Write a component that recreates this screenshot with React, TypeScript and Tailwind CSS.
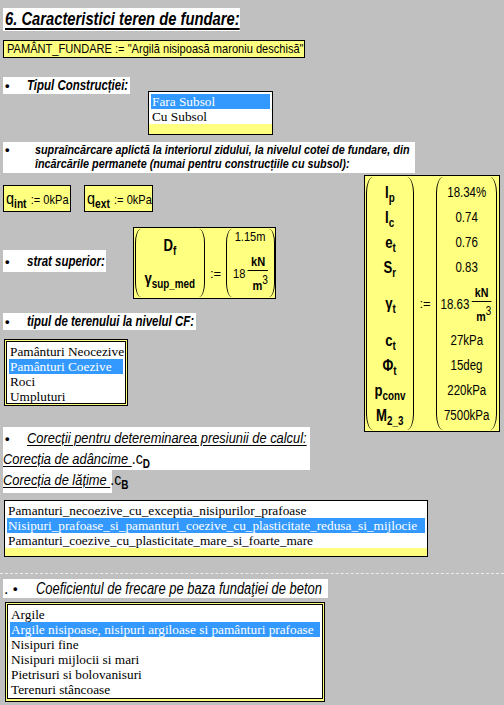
import React from 'react';

const SANS = "font-['Liberation_Sans','Arial',sans-serif]";
const SERIF = "font-['Liberation_Serif','Times_New_Roman',serif]";

type ListBoxProps = {
  items: string[];
  selected: number;
  className: string;
  innerClassName?: string;
};

// mathcad style list box: black frame, yellow region, white list
const ListBox = ({ items, selected, className, innerClassName = '' }: ListBoxProps) => (
  <div className={`border border-black bg-[#ffff80] ${className}`}>
    <div className={`bg-white ${SERIF} text-[13.3px] leading-[15px] whitespace-nowrap text-black ${innerClassName}`}>
      {items.map((item, i) => (
        <div key={item} className={i === selected ? 'bg-[#3399ff] text-white pl-[1px]' : 'pl-[1px]'}>
          {item}
        </div>
      ))}
    </div>
  </div>
);

const Sub = ({ children }: { children: React.ReactNode }) => (
  <span className="align-[-4px] text-[12px] font-bold not-italic leading-none">{children}</span>
);

const Sym = ({ children }: { children: React.ReactNode }) => (
  <span className="text-[16px] font-bold leading-none">{children}</span>
);

// the sheet uses a narrow arial, squeeze the regular one
const Cell = ({ h, children }: { h: string; children: React.ReactNode }) => (
  <div className={`${h} flex items-center justify-center whitespace-nowrap`}>
    <span className="inline-block scale-x-[0.82]">{children}</span>
  </div>
);

const Frac = () => (
  <span className="inline-flex flex-col items-center leading-none">
    <span className="text-[13px] font-bold pb-[2px]">kN</span>
    <span className="w-[24px] border-t border-black" />
    <span className="text-[13px] font-bold pt-[3px] pl-[5px]">
      m<span className="align-[6px] text-[12px] font-normal">3</span>
    </span>
  </span>
);

const Bullet = () => (
  <span className="inline-block w-[24px] pl-[2px] not-italic font-bold text-[13px]">•</span>
);

export default function App() {
  return (
    <div className={`w-[504px] h-[705px] bg-[#c0c0c0] overflow-hidden text-black ${SANS}`}>
      {/* title */}
      <div className="pt-[8px] pl-[3px]">
        <div className="w-[237px] h-[23px] bg-white pl-[2px] text-[18px] leading-[23px] font-bold italic whitespace-nowrap">
          <span className="inline-block origin-left scale-x-[0.82] underline decoration-[1.5px] underline-offset-[3px]">
            6. Caracteristici teren de fundare:
          </span>
        </div>
      </div>

      <div className="mt-[9px] ml-[3px] w-[302px] h-[18px] border border-black bg-[#ffff80] pl-[3px] text-[13.5px] leading-[16px] whitespace-nowrap">
        <span className="inline-block origin-left scale-x-[0.82]">
          PAMÂNT_FUNDARE := "Argilă nisipoasă maroniu deschisă"
        </span>
      </div>

      {/* tipul constructiei */}
      <div className="flex items-start pl-[3px]">
        <div className="mt-[19px] w-[127px] h-[17px] bg-white text-[14px] leading-[17px] font-bold italic whitespace-nowrap">
          <Bullet />
          <span className="inline-block origin-left scale-x-[0.82]">Tipul Construcției:</span>
        </div>
        <ListBox
          items={['Fara Subsol', 'Cu Subsol']}
          selected={0}
          className="mt-[33px] ml-[18px] w-[125px] h-[44px] pb-[7px]"
          innerClassName="pt-[2px] px-[2px]"
        />
      </div>

      {/* supraincarcare */}
      <div className="mt-[7px] ml-[3px] w-[412px] h-[31px] bg-white flex text-[13.5px] leading-[14px] font-bold italic pt-[1px] whitespace-nowrap">
        <span className="w-[32px] shrink-0 pl-[2px] not-italic text-[13px]">•</span>
        <span className="inline-block origin-left scale-x-[0.8]">
          supraîncărcare aplictă la interiorul zidului, la nivelul cotei de fundare, din
          <br />
          încărcările permanete (numai pentru construcțiile cu subsol):
        </span>
      </div>

      <div className="flex items-start">
        {/* left column */}
        <div className="w-[364px] shrink-0 pl-[3px]">
          <div className="mt-[12px] flex gap-[13px]">
            <div className="w-[68px] h-[27px] border border-black bg-[#ffff80] pl-[2px] pt-[4px] whitespace-nowrap leading-none">
              <span className="inline-block origin-left scale-x-[0.85]">
                <span className="text-[17px]">q</span>
                <Sub>int</Sub>
                <span className="text-[13px] ml-[5px]">:= 0kPa</span>
              </span>
            </div>
            <div className="w-[69px] h-[27px] border border-black bg-[#ffff80] pl-[2px] pt-[4px] whitespace-nowrap leading-none">
              <span className="inline-block origin-left scale-x-[0.85]">
                <span className="text-[17px]">q</span>
                <Sub>ext</Sub>
                <span className="text-[13px] ml-[5px]">:= 0kPa</span>
              </span>
            </div>
          </div>

          {/* strat superior */}
          <div className="mt-[15px] flex items-start">
            <div className="mt-[23px] w-[103px] h-[22px] bg-white text-[14px] leading-[22px] font-bold italic whitespace-nowrap">
              <Bullet />
              <span className="inline-block origin-left scale-x-[0.82]">strat superior:</span>
            </div>
            <div className="ml-[27px] w-[143px] h-[72px] border border-black bg-[#ffff80] flex">
              <div className="ml-[1px] mt-[1px] w-[70px] h-[68px] border-x border-black rounded-[6px/14px] flex flex-col">
                <Cell h="h-[34px]"><Sym>D</Sym><Sub>f</Sub></Cell>
                <Cell h="h-[32px]"><Sym>γ</Sym><Sub>sup_med</Sub></Cell>
              </div>
              <div className="w-[21px] pt-[38px] text-center text-[13px] leading-[15px]">:=</div>
              <div className="mt-[1px] w-[49px] h-[68px] border-x border-black rounded-[6px/14px] flex flex-col items-center">
                <div className="h-[13px] text-[13px] leading-[13px] pt-[1px]">
                  <span className="inline-block scale-x-[0.85]">1.15m</span>
                </div>
                <div className="h-[55px] pt-[8px] flex items-center">
                  <span className="inline-flex items-center gap-[3px] scale-x-[0.85]">
                    <span className="text-[13px]">18</span>
                    <Frac />
                  </span>
                </div>
              </div>
            </div>
          </div>

          <div className="mt-[14px] w-[193px] h-[17px] bg-white text-[14px] leading-[17px] font-bold italic whitespace-nowrap">
            <Bullet />
            <span className="inline-block origin-left scale-x-[0.82]">tipul de terenului la nivelul CF:</span>
          </div>

          <ListBox
            items={['Pamânturi Neocezive', 'Pamânturi Coezive', 'Roci', 'Umpluturi']}
            selected={1}
            className="mt-[9px] ml-[1px] w-[124px] h-[67px] p-[1px]"
            innerClassName="border border-black h-full pt-[2px] px-[2px]"
          />

          {/* corectii */}
          <div className="mt-[21px] w-[307px] bg-white text-[15.5px] italic">
            <div className="h-[21px] leading-[21px] whitespace-nowrap">
              <Bullet />
              <span className="inline-block origin-left scale-x-[0.83] underline underline-offset-[2px]">
                Corecții pentru detereminarea presiunii de calcul:
              </span>
            </div>
            <div className="h-[22px] leading-[22px] whitespace-nowrap">
              <span className="inline-block origin-left scale-x-[0.83]">
                <span className="underline underline-offset-[2px]">Corecția de adâncime </span>
                <span className="not-italic text-[17px]">.c</span>
                <Sub>D</Sub>
              </span>
            </div>
          </div>
          <div className="w-[109px] h-[23px] bg-white text-[15.5px] italic leading-[20px] whitespace-nowrap">
            <span className="inline-block origin-left scale-x-[0.83]">
              <span className="underline underline-offset-[2px]">Corecția de lățime </span>
              <span className="not-italic text-[17px]">.c</span>
              <Sub>B</Sub>
            </span>
          </div>
        </div>

        {/* matrix */}
        <div className="mt-[2px] w-[136px] h-[257px] border border-black bg-[#ffff80] flex">
          <div className="ml-[1px] mt-[1px] w-[48px] h-[253px] border-x border-black rounded-[7px/16px] pt-[3px] flex flex-col">
            <Cell h="h-[25px]"><Sym>I</Sym><Sub>p</Sub></Cell>
            <Cell h="h-[25px]"><Sym>I</Sym><Sub>c</Sub></Cell>
            <Cell h="h-[25px]"><Sym>e</Sym><Sub>t</Sub></Cell>
            <Cell h="h-[25px]"><Sym>S</Sym><Sub>r</Sub></Cell>
            <Cell h="h-[48px]"><Sym>γ</Sym><Sub>t</Sub></Cell>
            <Cell h="h-[25px]"><Sym>c</Sym><Sub>t</Sub></Cell>
            <Cell h="h-[25px]"><Sym>Φ</Sym><Sub>t</Sub></Cell>
            <Cell h="h-[25px]"><Sym>p</Sym><Sub>conv</Sub></Cell>
            <Cell h="h-[25px]"><Sym>M</Sym><Sub>2_3</Sub></Cell>
          </div>
          <div className="w-[22px] flex items-center justify-center text-[13px]">:=</div>
          <div className="mt-[1px] w-[61px] h-[253px] border-x border-black rounded-[7px/16px] pt-[3px] flex flex-col text-[14px]">
            <Cell h="h-[25px]">18.34%</Cell>
            <Cell h="h-[25px]">0.74</Cell>
            <Cell h="h-[25px]">0.76</Cell>
            <Cell h="h-[25px]">0.83</Cell>
            <div className="h-[48px] flex items-center justify-center">
              <span className="inline-flex items-center gap-[3px] scale-x-[0.82]">
                <span>18.63</span>
                <Frac />
              </span>
            </div>
            <Cell h="h-[25px]">27kPa</Cell>
            <Cell h="h-[25px]">15deg</Cell>
            <Cell h="h-[25px]">220kPa</Cell>
            <Cell h="h-[25px]">7500kPa</Cell>
          </div>
        </div>
      </div>

      <ListBox
        items={[
          'Pamanturi_necoezive_cu_exceptia_nisipurilor_prafoase',
          'Nisipuri_prafoase_si_pamanturi_coezive_cu_plasticitate_redusa_si_mijlocie',
          'Pamanturi_coezive_cu_plasticitate_mare_si_foarte_mare',
        ]}
        selected={1}
        className="mt-[7px] ml-[4px] w-[424px] h-[57px] pb-[8px]"
        innerClassName="pt-[2px] px-[2px]"
      />

      <div className="mt-[16px] border-t border-dashed border-[#ececec]" />

      <div className="mt-[5px] ml-[3px] w-[325px] h-[19px] bg-white text-[15.8px] leading-[19px] italic whitespace-nowrap flex">
        <span className="w-[10px] shrink-0 pl-[1px] not-italic">.</span>
        <span className="w-[23px] shrink-0 not-italic font-bold text-[13px]">•</span>
        <span className="inline-block shrink-0 origin-left scale-x-[0.82]">Coeficientul de frecare pe baza fundaţiei de beton</span>
      </div>

      <ListBox
        items={[
          'Argile',
          'Argile nisipoase, nisipuri argiloase si pamânturi prafoase',
          'Nisipuri fine',
          'Nisipuri mijlocii si mari',
          'Pietrisuri si bolovanisuri',
          'Terenuri stâncoase',
        ]}
        selected={1}
        className="mt-[4px] ml-[5px] w-[320px] h-[100px] p-[1px] pb-[2px]"
        innerClassName="border border-black h-full pt-[2px] px-[2px]"
      />
    </div>
  );
}
